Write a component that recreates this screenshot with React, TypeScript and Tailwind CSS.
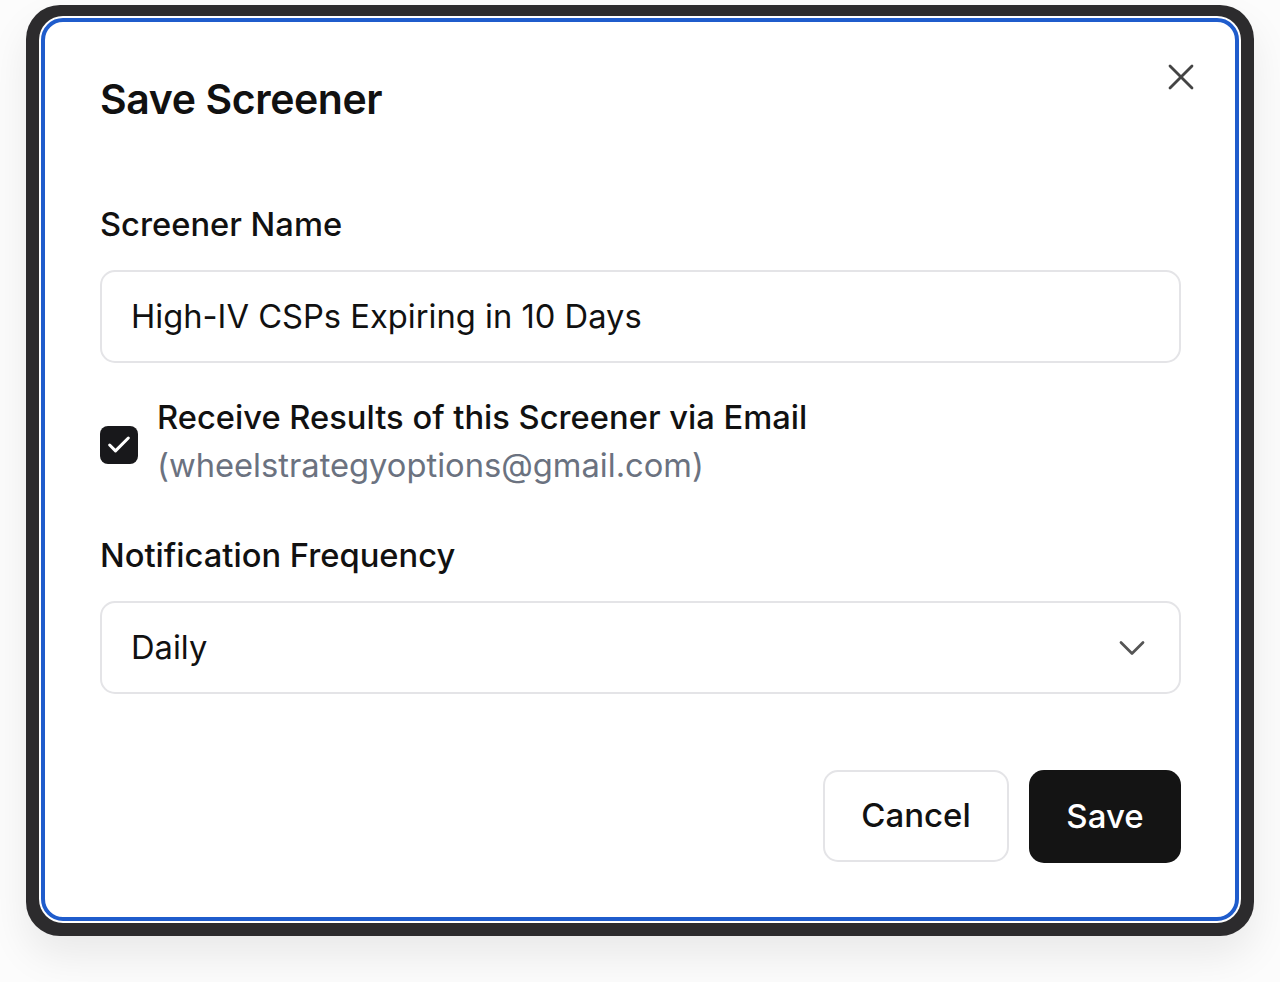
import { Check, ChevronDown, X } from "lucide-react"

export default function App() {
	return (
		<div
			className="w-[1280px] h-[982px] bg-[#fcfcfc] pt-[5px] pl-[26px]"
			style={{ fontFamily: "Inter, 'Noto Sans', sans-serif" }}
		>
			<div className="w-[1228px] h-[931px] bg-[#2c2b2d] rounded-[34px] pt-[11px] pl-[13px] shadow-[0_20px_40px_rgba(0,0,0,0.08)]">
				<div className="w-[1202px] h-[907px] bg-white rounded-[24px] p-[2px]">
					<div className="relative w-full h-full rounded-[22px] border-[4px] border-[#1f5ccc] bg-white pl-[55px] pr-[54px]">
						<button className="absolute top-[33px] right-[32px] text-[#444]">
							<X size={44} strokeWidth={1.5} />
						</button>

						<h2 className="mt-[53px] text-[41px] leading-[48px] font-semibold tracking-[-0.4px] text-[#111]">
							Save Screener
						</h2>

						<label className="block mt-[81px] text-[32.7px] leading-[40px] font-medium text-[#111]">
							Screener Name
						</label>
						<div className="mt-[26px] h-[93px] rounded-[15px] border-2 border-[#e4e4e7] flex items-center px-[29px] text-[32.7px] text-[#111]">
							High-IV CSPs Expiring in 10 Days
						</div>

						<div className="mt-[30px] flex items-center gap-[19px]">
							<div className="mt-[8px] w-[38px] h-[38px] rounded-[8px] bg-[#18181b] flex items-center justify-center text-white">
								<Check size={28} strokeWidth={2.6} />
							</div>
							<div className="flex flex-col">
								<span className="text-[32.7px] leading-[48px] font-medium text-[#111]">
									Receive Results of this Screener via Email
								</span>
								<span className="text-[32.7px] leading-[48px] text-[#6b7280]">
									(wheelstrategyoptions@gmail.com)
								</span>
							</div>
						</div>

						<label className="block mt-[46px] text-[32.7px] leading-[40px] font-medium text-[#111]">
							Notification Frequency
						</label>
						<div className="mt-[26px] h-[93px] rounded-[15px] border-2 border-[#e4e4e7] flex items-center justify-between pl-[29px] pr-[25px] text-[32.7px] text-[#111]">
							<span>Daily</span>
							<ChevronDown size={44} strokeWidth={1.5} className="text-[#555]" />
						</div>

						<div className="mt-[76px] flex justify-end gap-[20px]">
							<button className="w-[186px] h-[92px] rounded-[15px] border-2 border-[#e4e4e7] bg-white text-[33px] font-medium text-[#111]">
								Cancel
							</button>
							<button className="w-[152px] h-[93px] rounded-[15px] bg-[#141414] text-[33px] font-medium text-white">
								Save
							</button>
						</div>
					</div>
				</div>
			</div>
		</div>
	)
}
